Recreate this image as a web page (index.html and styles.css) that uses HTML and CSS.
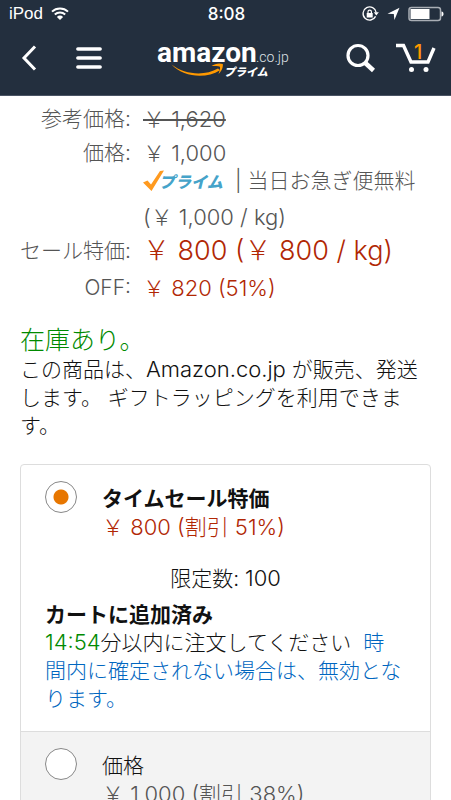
FILE: index.html
```html
<!DOCTYPE html>
<html lang="ja">
<head>
<meta charset="utf-8">
<meta name="viewport" content="width=device-width, initial-scale=1">
<title>Amazon.co.jp</title>
<link rel="stylesheet" href="styles.css">
</head>
<body>
<header class="top">
  <div class="status">
    <div class="status-side">
      <span>iPod</span>
      <svg class="wifi" width="18" height="14" viewBox="0 0 18 14" fill="none" stroke="#fff" stroke-width="2"><path d="M1 4.6a11.6 11.6 0 0 1 16 0M3.8 7.6a7.6 7.6 0 0 1 10.400 0"/><path d="M9 13 5.900 9.900a4.400 4.400 0 0 1 6.200 0z" fill="#fff" stroke="none"/></svg>
    </div>
    <time class="clock">8:08</time>
    <div class="status-side status-right">
      <svg width="17" height="16" viewBox="0 0 17 16"><path d="M13.600 10.400A6.600 6.600 0 1 1 14.200 6.500" fill="none" stroke="#fff" stroke-width="1.300"/><path d="M11.800 6.300h5L14.300 9.500z" fill="#fff"/><path d="M4.700 7h6v4.500h-6z" fill="#fff"/><path d="M6 7.200V5.800a1.700 1.700 0 0 1 3.400 0v1.400" fill="none" stroke="#fff" stroke-width="1.200"/></svg>
      <svg width="13" height="14" viewBox="0 0 13 14"><path d="M12.500.8 7.400 13 6.800 7 .5 6.800z" fill="#fff"/></svg>
      <svg class="battery" width="36" height="16" viewBox="0 0 36 16"><rect x="1" y="1.500" width="31.500" height="13" rx="2.500" fill="none" stroke="#a9aeb5" stroke-width="1.500"/><path d="M2.500 3h19v10h-19z" fill="#fff"/><path d="M33.500 5.500c1.500.3 2 1.200 2 2.500s-.5 2.200-2 2.500z" fill="#fff"/></svg>
    </div>
  </div>
  <nav class="nav">
    <button class="icon-btn back" aria-label="戻る"><svg width="16" height="26" viewBox="0 0 16 26" fill="none" stroke="#fff" stroke-width="3"><path d="M14 1.500 3 13l11 11.500"/></svg></button>
    <button class="icon-btn" aria-label="メニュー"><svg width="26" height="22" viewBox="0 0 26 22" fill="none" stroke="#fff" stroke-width="3.600" stroke-linecap="round"><path d="M1.900 2h22.200M1.900 11h22.200M1.900 20h22.200"/></svg></button>
    <a class="logo" href="#" aria-label="Amazon.co.jp">
      <svg width="134" height="40" viewBox="0 0 134 40"><text class="logo-name" x="0" y="22">amazon</text><text class="logo-domain" x="99" y="22">.co.jp</text><path d="M14.500 24.500C28 35 48 36 61 28.500l2 1.700C49 39 27 37.500 14.500 24.500z" fill="#ff9900"/><path d="M54.500 26c3.500-2.600 8-3.200 11.300-2 .5 3.200-1.200 7.600-4.300 10 .9-2.700 1.900-5.400 1.500-7.200-2-.9-5-.7-8.500-.8z" fill="#ff9900"/><text class="logo-prime" x="67" y="36">プライム</text></svg>
    </a>
    <button class="icon-btn search" aria-label="検索"><svg width="30" height="28" viewBox="0 0 30 28" fill="none" stroke="#fff"><circle cx="12" cy="11.500" r="10" stroke-width="3.200"/><path d="M18.800 18.500 27.500 26.500" stroke-width="4.500"/></svg></button>
    <a class="cart" href="#" aria-label="カート"><svg width="40" height="32" viewBox="0 0 40 32"><path d="M0 3.500h7.500L15 20h17l6-14" fill="none" stroke="#fff" stroke-width="3.400"/><circle cx="15.500" cy="27.500" r="2.500" fill="#fff"/><circle cx="30" cy="27.500" r="2.500" fill="#fff"/><text class="cart-count" x="18" y="17">1</text></svg></a>
  </nav>
</header>
<main class="page">
  <table class="prices">
    <tr><th>参考価格:</th><td><s>￥ 1,620</s></td></tr>
    <tr><th>価格:</th><td>￥ 1,000
      <div class="shipping"><svg width="80" height="22" viewBox="0 0 80 22" role="img" aria-label="プライム"><path d="M0 12.500 4.500 10.500 8 14.500 17 1l4-.5L8.500 21z" fill="#ff9a1f"/><text class="prime-text" x="16" y="18">プライム</text></svg><span>| 当日お急ぎ便無料</span></div>
      <div class="unit">(￥ 1,000 / kg)</div></td></tr>
    <tr><th>セール特価:</th><td class="deal large">￥ 800 (￥ 800 / kg)</td></tr>
    <tr><th>OFF:</th><td class="deal">￥ 820 (51%)</td></tr>
  </table>
  <section class="stock">
    <h2>在庫あり。</h2>
    <p>この商品は、<span class="latin">Amazon.co.jp</span> が販売、発送します。 ギフトラッピングを利用できます。</p>
  </section>
  <form class="offers">
    <div class="offer">
      <div class="choice">
        <input type="radio" name="offer" id="offer-deal" checked>
        <label for="offer-deal"><strong>タイムセール特価</strong><span class="deal price">￥ 800 (割引 51%)</span></label>
      </div>
      <p class="limit">限定数: <span class="latin">100</span></p>
      <p><strong>カートに追加済み</strong></p>
      <p class="notice"><span class="timer latin">14:54</span>分以内に注文してください <a href="#">時間内に確定されない場合は、無効となります。</a></p>
    </div>
    <div class="offer other">
      <div class="choice">
        <input type="radio" name="offer" id="offer-regular">
        <label for="offer-regular"><span>価格</span><span class="muted price">￥ 1,000 (割引 38%)</span></label>
      </div>
    </div>
  </form>
</main>
</body>
</html>
```
FILE: styles.css
```css
* { box-sizing: border-box; }
html { overflow: hidden; }
body {
  margin: 0;
  background: #fff;
  color: #111;
  font: 300 21px/28px Inter, "Noto Sans CJK JP", sans-serif;
}
p, h2 { margin: 0; }
svg { display: block; flex: none; overflow: visible; }
a { color: #0066c0; text-decoration: none; }
strong { font-weight: 700; }
.latin { font-size: 22px; line-height: 1; }
.price { font-size: 22px; }

.top {
  background: #232f3e;
  color: #fff;
  border-bottom: 1px solid #4a5464;
}
.status {
  display: grid;
  grid-template-columns: 1fr auto 1fr;
  align-items: center;
  height: 28px;
  padding: 0 7px 0 9px;
  font: 400 17px/28px "Liberation Sans", sans-serif;
}
.status-side { display: flex; align-items: center; gap: 8px; }
.status-right { justify-content: flex-end; }
.clock { font: 500 17px/28px Inter, sans-serif; }
.nav {
  display: flex;
  align-items: center;
  height: 67px;
  padding: 0 15px 8px 21px;
}
.icon-btn { border: 0; padding: 0; background: none; }
.back { margin-right: 39px; }
.logo { margin: 4px auto 0; }
.logo-name { font: 700 28px Roboto, sans-serif; fill: #fff; }
.logo-domain { font: 300 14px Roboto, sans-serif; fill: #dfe2e6; }
.logo-prime { font: italic 900 11px "Noto Sans CJK JP", sans-serif; fill: #fff; }
.search { margin-right: 20px; }
.cart-count { font: 500 20px Inter, sans-serif; fill: #ff9900; }

.page { padding: 9px 20px 0; }
.prices { border-collapse: collapse; color: #555; }
.prices th, .prices td { padding: 0 0 6px; vertical-align: top; font-weight: 300; }
.prices th { width: 111px; text-align: right; white-space: nowrap; }
.prices td { padding-left: 12px; font-size: 22px; }
.shipping { display: flex; align-items: center; gap: 12px; white-space: nowrap; font-size: 21px; }
.prime-text { font: italic 900 16px "Noto Sans CJK JP", sans-serif; fill: #45a3c9; }
.unit { margin-top: 8px; }
.prices .large { font-size: 27px; padding-bottom: 9px; }
.prices .deal, .deal { color: #b12704; }

.stock { margin-top: 16px; }
.stock h2 { color: #008a00; font-size: 25px; font-weight: 300; line-height: 32px; }

.offers { margin-top: 24px; border: 1px solid #ddd; border-radius: 4px; }
.offer { padding: 20px 24px 18px; }
.other { background: #f3f3f3; border-top: 1px solid #ddd; }
.choice { display: flex; gap: 25px; }
.choice label { display: flex; flex-direction: column; }
.choice input {
  appearance: none;
  flex: none;
  width: 32px;
  height: 32px;
  margin: -4px 0 0;
  border: 1px solid #888;
  border-radius: 50%;
  background: #fff;
}
.choice input:checked { background: radial-gradient(circle, #e77600 7px, #fff 8px); }
.limit { margin: 24px 0 8px; text-align: center; }
.notice { margin-right: 3px; }
.notice a { margin-left: 6px; }
.timer { color: #008a00; }
.muted { color: #555; }
```
